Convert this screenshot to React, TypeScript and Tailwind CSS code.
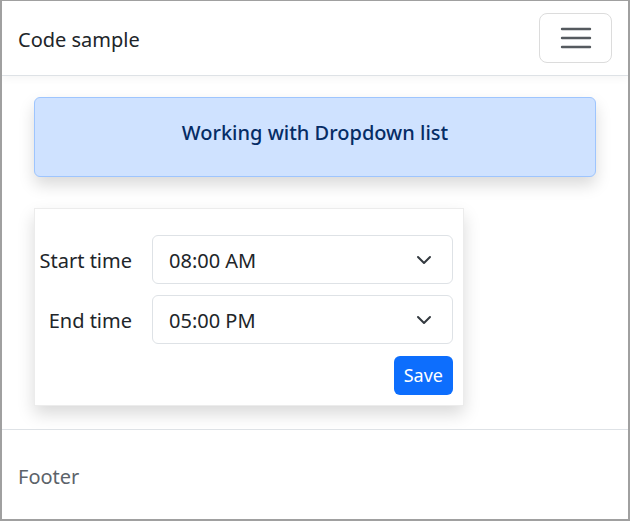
export default function App() {
  const font = { fontFamily: '"Noto Sans", "Open Sans", Arial, sans-serif' }

  return (
    <div
      style={font}
      className="w-[630px] h-[521px] flex flex-col bg-white border-[#a0a0a0] border-t border-l-2 border-r-2 border-b-2 text-[#212529] overflow-hidden"
    >
      {/* Header */}
      <header className="h-[75px] shrink-0 flex items-center justify-between pl-4 pr-4 border-b border-[#dee2e6] shadow-[0_3px_8px_rgba(0,0,0,0.04)]">
        <span className="text-[20px] text-[#212529] mt-[3px]">Code sample</span>
        <button className="w-[73px] h-[50px] border border-[#dcdcdc] rounded-lg flex items-center justify-center">
          <svg width="32" height="24" viewBox="0 0 32 24">
            <g stroke="#555a5f" strokeWidth="2.4" strokeLinecap="round">
              <line x1="2" y1="3" x2="30" y2="3" />
              <line x1="2" y1="12" x2="30" y2="12" />
              <line x1="2" y1="21" x2="30" y2="21" />
            </g>
          </svg>
        </button>
      </header>

      {/* Body */}
      <main className="flex-1 px-8 pt-[21px]">
        <div className="h-[80px] pb-[8px] flex items-center justify-center rounded-md border border-[#9ec5fe] bg-[#cfe2ff] shadow-[0_8px_16px_rgba(0,0,0,0.15)]">
          <span className="text-[20px] font-medium text-[#052c65]">Working with Dropdown list</span>
        </div>

        <div className="mt-[31px] w-[430px] bg-white border border-[#ececec] shadow-[0_8px_16px_rgba(0,0,0,0.15)] pt-[26px] pb-[10px] pr-[10px]">
          <div className="flex flex-col gap-[11px]">
            {[
              ['Start time', '08:00 AM'],
              ['End time', '05:00 PM'],
            ].map(([label, value]) => (
              <div key={label} className="flex items-center">
                <label className="w-[97px] text-right text-[20px] text-[#212529] pt-[2px]">{label}</label>
                <div className="ml-[20px] w-[301px] h-[49px] border border-[#dee2e6] rounded-md flex items-center justify-between pl-4 pr-[20px]">
                  <span className="text-[20px] text-[#212529] pt-[2px]">{value}</span>
                  <svg width="16" height="16" viewBox="0 0 16 16" fill="none">
                    <path d="m2 5 6 6 6-6" stroke="#343a40" strokeWidth="2" strokeLinecap="round" strokeLinejoin="round" />
                  </svg>
                </div>
              </div>
            ))}
          </div>
          <div className="flex justify-end mt-[12px]">
            <button className="h-[39px] px-[10px] rounded-md bg-[#0d6efd] text-white text-[18px]">Save</button>
          </div>
        </div>
      </main>

      {/* Footer */}
      <footer className="h-[90px] shrink-0 border-t border-[#dee2e6] flex items-center pl-4 pt-[5px]">
        <span className="text-[20px] text-[#5c636a]">Footer</span>
      </footer>
    </div>
  )
}
